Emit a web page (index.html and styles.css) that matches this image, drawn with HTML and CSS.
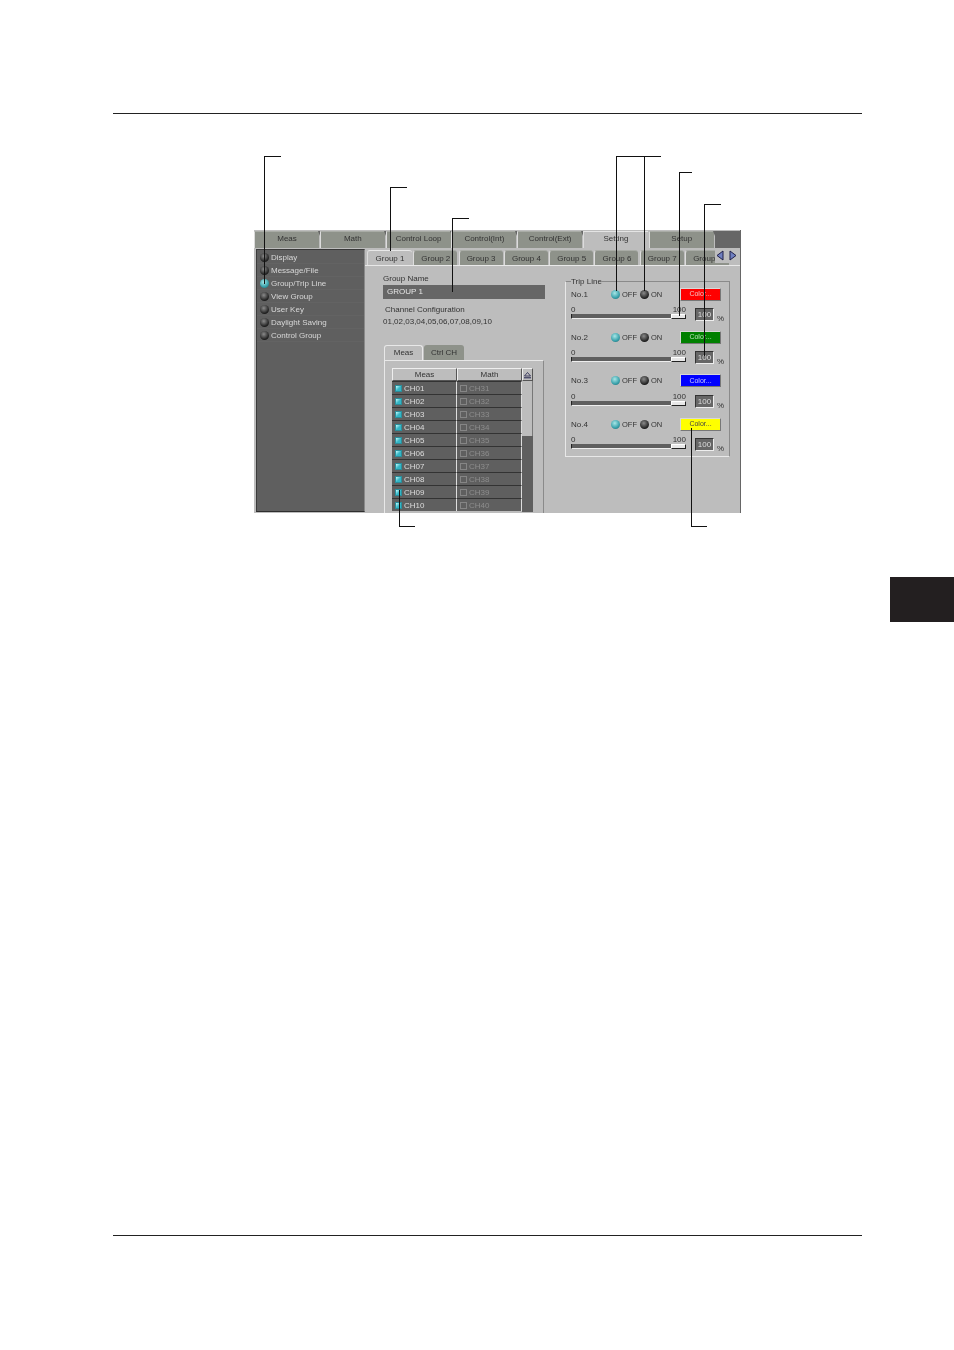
FILE: index.html
```html
<!DOCTYPE html>
<html>
<head>
  <meta charset="UTF-8">
  <meta name="viewport" content="width=device-width, initial-scale=1.0">
  <title>Group / Trip Line</title>
  <link rel="stylesheet" href="styles.css">
</head>
<body>
<div class="page">
  <div class="rule-top"></div>

  <div class="window">
    <div class="main-tabs">
      <div class="main-tab">Meas</div>
      <div class="main-tab">Math</div>
      <div class="main-tab">Control Loop</div>
      <div class="main-tab">Control(Int)</div>
      <div class="main-tab">Control(Ext)</div>
      <div class="main-tab active">Setting</div>
      <div class="main-tab">Setup</div>
      <div class="main-fill"></div>
    </div>

    <div class="window-body">
      <div class="side">
        <div class="side-item"><span class="led"></span>Display</div>
        <div class="side-item"><span class="led"></span>Message/File</div>
        <div class="side-item"><span class="led on"></span>Group/Trip Line</div>
        <div class="side-item"><span class="led"></span>View Group</div>
        <div class="side-item"><span class="led"></span>User Key</div>
        <div class="side-item"><span class="led"></span>Daylight Saving</div>
        <div class="side-item"><span class="led"></span>Control Group</div>
      </div>

      <div class="content">
        <div class="group-tabs">
          <div class="group-tab active">Group 1</div>
          <div class="group-tab">Group 2</div>
          <div class="group-tab">Group 3</div>
          <div class="group-tab">Group 4</div>
          <div class="group-tab">Group 5</div>
          <div class="group-tab">Group 6</div>
          <div class="group-tab">Group 7</div>
          <div class="group-tab cut">Group 8</div>
          <div class="arrows">
            <svg width="24" height="13" viewBox="0 0 24 13">
              <path d="M8 2 L2 6.5 L8 11 Z" fill="#6f7fc0" stroke="#20204a"/>
              <path d="M15 2 L21 6.5 L15 11 Z" fill="#6f7fc0" stroke="#20204a"/>
            </svg>
          </div>
        </div>

        <div class="pane">
          <div class="pane-left">
            <div class="label">Group Name</div>
            <div class="name-field">GROUP 1</div>
            <div class="label conf-title">Channel Configuration</div>
            <div class="label conf-list">01,02,03,04,05,06,07,08,09,10</div>

            <div class="sub-tabs">
              <div class="sub-tab active">Meas</div>
              <div class="sub-tab">Ctrl CH</div>
            </div>
            <div class="sub-pane">
              <div class="table">
                <div class="table-main">
                  <div class="table-head">
                    <div>Meas</div>
                    <div>Math</div>
                  </div>
                  <div class="table-row"><div><span class="check on"></span>CH01</div><div class="off"><span class="check"></span>CH31</div></div>
                  <div class="table-row"><div><span class="check on"></span>CH02</div><div class="off"><span class="check"></span>CH32</div></div>
                  <div class="table-row"><div><span class="check on"></span>CH03</div><div class="off"><span class="check"></span>CH33</div></div>
                  <div class="table-row"><div><span class="check on"></span>CH04</div><div class="off"><span class="check"></span>CH34</div></div>
                  <div class="table-row"><div><span class="check on"></span>CH05</div><div class="off"><span class="check"></span>CH35</div></div>
                  <div class="table-row"><div><span class="check on"></span>CH06</div><div class="off"><span class="check"></span>CH36</div></div>
                  <div class="table-row"><div><span class="check on"></span>CH07</div><div class="off"><span class="check"></span>CH37</div></div>
                  <div class="table-row"><div><span class="check on"></span>CH08</div><div class="off"><span class="check"></span>CH38</div></div>
                  <div class="table-row"><div><span class="check on"></span>CH09</div><div class="off"><span class="check"></span>CH39</div></div>
                  <div class="table-row"><div><span class="check on"></span>CH10</div><div class="off"><span class="check"></span>CH40</div></div>
                </div>
                <div class="scroll">
                  <div class="scroll-btn">
                    <svg width="9" height="8" viewBox="0 0 9 8">
                      <path d="M4.5 1.5 L7.5 5 L1.5 5 Z" fill="#bdbdbd" stroke="#20204a" stroke-width="0.8"/>
                      <path d="M1 6.8 H8" stroke="#20204a"/>
                    </svg>
                  </div>
                  <div class="scroll-thumb"></div>
                  <div class="scroll-track"></div>
                </div>
              </div>
            </div>
          </div>

          <fieldset class="trip">
            <legend>Trip Line</legend>

            <div class="trip-item">
              <div class="trip-top">
                <span class="trip-no">No.1</span>
                <span class="led on"></span><span class="opt">OFF</span>
                <span class="led"></span><span class="opt">ON</span>
                <button class="color red">Color...</button>
              </div>
              <div class="trip-bottom">
                <div class="slider">
                  <div class="slider-nums"><span>0</span><span>100</span></div>
                  <div class="slider-bar"><div class="slider-knob"></div></div>
                </div>
                <div class="value">100</div>
                <span class="pct">%</span>
              </div>
            </div>

            <div class="trip-item">
              <div class="trip-top">
                <span class="trip-no">No.2</span>
                <span class="led on"></span><span class="opt">OFF</span>
                <span class="led"></span><span class="opt">ON</span>
                <button class="color green">Color...</button>
              </div>
              <div class="trip-bottom">
                <div class="slider">
                  <div class="slider-nums"><span>0</span><span>100</span></div>
                  <div class="slider-bar"><div class="slider-knob"></div></div>
                </div>
                <div class="value">100</div>
                <span class="pct">%</span>
              </div>
            </div>

            <div class="trip-item">
              <div class="trip-top">
                <span class="trip-no">No.3</span>
                <span class="led on"></span><span class="opt">OFF</span>
                <span class="led"></span><span class="opt">ON</span>
                <button class="color blue">Color...</button>
              </div>
              <div class="trip-bottom">
                <div class="slider">
                  <div class="slider-nums"><span>0</span><span>100</span></div>
                  <div class="slider-bar"><div class="slider-knob"></div></div>
                </div>
                <div class="value">100</div>
                <span class="pct">%</span>
              </div>
            </div>

            <div class="trip-item">
              <div class="trip-top">
                <span class="trip-no">No.4</span>
                <span class="led on"></span><span class="opt">OFF</span>
                <span class="led"></span><span class="opt">ON</span>
                <button class="color yellow">Color...</button>
              </div>
              <div class="trip-bottom">
                <div class="slider">
                  <div class="slider-nums"><span>0</span><span>100</span></div>
                  <div class="slider-bar"><div class="slider-knob"></div></div>
                </div>
                <div class="value">100</div>
                <span class="pct">%</span>
              </div>
            </div>
          </fieldset>
        </div>
      </div>
    </div>
  </div>

  <div class="rule-bottom"></div>

  <!-- leader lines over the screenshot -->
  <div class="lead lead-1"></div>
  <div class="lead lead-2"></div>
  <div class="lead lead-3"></div>
  <div class="lead lead-4a"></div>
  <div class="lead lead-4b"></div>
  <div class="lead lead-5"></div>
  <div class="lead lead-6"></div>
  <div class="lead-up lead-7"></div>
  <div class="lead-up lead-8"></div>

  <div class="thumb-tab"></div>
</div>
</body>
</html>
```

FILE: styles.css
```css
* {
  box-sizing: border-box;
}

body {
  margin: 0;
  background: #fff;
  font-family: "Liberation Sans", Arial, sans-serif;
  font-size: 8px;
  color: #333;
}

.page {
  position: relative;
  width: 954px;
  height: 1350px;
  overflow: hidden;
}

.rule-top {
  height: 114px;
  margin: 0 92px 116px 113px;
  border-bottom: 1px solid #222;
}

.rule-bottom {
  height: 1px;
  margin: 722px 92px 0 113px;
  background: #222;
}

.thumb-tab {
  position: absolute;
  top: 577px;
  right: 0;
  width: 64px;
  height: 45px;
  background: #231f20;
}

/* window */
.window {
  width: 487px;
  height: 283px;
  margin-left: 254px;
  background: #bdbdbd;
  border-right: 1px solid #666;
  overflow: hidden;
  filter: blur(0.3px);
}

.main-tabs {
  display: flex;
  height: 18px;
  padding-top: 1px;
}

.main-tab {
  position: relative;
  width: 65px;
  margin-right: 0.8px;
  background: #8e928a;
  border-top: 1px solid #a9aca6;
  border-left: 1px solid #dcdcdc;
  text-align: center;
  line-height: 14px;
}

.main-tab::after {
  content: "";
  position: absolute;
  top: -1px;
  right: -3px;
  border-top: 5px solid #666;
  border-left: 2px solid transparent;
  border-right: 2px solid transparent;
}

.main-tab.active {
  background: #bdbdbd;
  border-top-color: #e4e4e4;
}

.main-tab.active::after {
  display: none;
}

.main-fill {
  flex: 1;
  background: #666;
}

.window-body {
  display: flex;
  height: 265px;
}

.side {
  width: 109px;
  height: 263px;
  margin: 1px 0 0 2px;
  padding-top: 1px;
  background: #5f5f5f;
  border: 1px solid #3a3a3a;
  border-right-color: #8a8a8a;
  border-bottom-color: #2e2e2e;
  color: #d8d8d8;
}

.side-item {
  display: flex;
  align-items: center;
  gap: 2px;
  height: 13px;
  padding-left: 3px;
  border-bottom: 1px solid #636363;
}

.led {
  flex: none;
  display: inline-block;
  width: 9px;
  height: 9px;
  border-radius: 50%;
  background: radial-gradient(circle at 42% 35%, #8a8a8a, #1c1c1c 70%);
}

.led.on {
  background: radial-gradient(circle at 42% 35%, #a8e6e6, #37a0aa 60%, #1e5c64);
}

/* right part */
.content {
  flex: 1;
  min-width: 0;
}

.group-tabs {
  position: relative;
  display: flex;
  height: 18px;
  padding: 2px 0 0 2px;
  overflow: hidden;
  border-bottom: 1px solid #e8e8e8;
}

.group-tab {
  flex: none;
  width: 44px;
  margin-right: 1.3px;
  background: #8e928a;
  border-left: 1px solid #dcdcdc;
  border-top: 1px solid #a9aca6;
  border-radius: 3px 3px 0 0;
  text-align: center;
  line-height: 15px;
}

.group-tab.active {
  width: 45px;
  height: 16px;
  background: #bdbdbd;
  border-top-color: #e8e8e8;
}

.arrows {
  position: absolute;
  top: 1px;
  right: 0;
  width: 25px;
  height: 14px;
  background: #bdbdbd;
}

.pane {
  display: flex;
  height: 247px;
}

.pane-left {
  width: 200px;
  padding: 7px 0 0 18px;
}

.label {
  height: 11px;
  line-height: 11px;
}

.name-field {
  width: 162px;
  height: 14px;
  margin-top: 1px;
  padding-left: 4px;
  background: #666;
  color: #e6e6e6;
  line-height: 14px;
}

.conf-title {
  margin-top: 5px;
  padding-left: 2px;
}

.conf-list {
  margin-top: 1px;
}

.sub-tabs {
  display: flex;
  gap: 1px;
  height: 15px;
  margin: 18px 0 0 1px;
}

.sub-tab {
  width: 40px;
  background: #8e928a;
  border-radius: 3px 3px 0 0;
  text-align: center;
  line-height: 15px;
}

.sub-tab.active {
  width: 39px;
  background: #bdbdbd;
  border: 1px solid #e8e8e8;
  border-bottom: none;
  line-height: 13px;
}

.sub-pane {
  width: 160px;
  height: 160px;
  margin-left: 1px;
  padding: 7px 0 0 7px;
  border-top: 1px solid #e8e8e8;
  border-left: 1px solid #e8e8e8;
  border-right: 1px solid #8a8a8a;
}

.table {
  display: flex;
  width: 142px;
}

.table-main {
  width: 130px;
}

.table-head,
.table-row {
  display: grid;
  grid-template-columns: 65px 65px;
}

.table-head div {
  height: 13px;
  background: #bdbdbd;
  border: 1px solid #eee;
  border-right-color: #555;
  border-bottom-color: #555;
  text-align: center;
  line-height: 11px;
}

.table-row div {
  display: flex;
  align-items: center;
  gap: 2px;
  height: 13px;
  padding-left: 3px;
  background: #5f5f5f;
  border-top: 1px solid #333;
  border-right: 1px solid #ddd;
  color: #ddd;
}

.table-row div.off {
  color: #8d8d8d;
}

.check {
  flex: none;
  width: 7px;
  height: 7px;
  border: 1px solid #858585;
}

.check.on {
  background: linear-gradient(135deg, #cff 0, #33b5c5 55%);
  border-color: #2b8d9a;
}

.scroll {
  width: 11px;
}

.scroll-btn {
  display: flex;
  align-items: center;
  justify-content: center;
  height: 13px;
  background: #bdbdbd;
  border: 1px solid #eee;
  border-right-color: #555;
  border-bottom-color: #555;
}

.scroll-thumb {
  height: 55px;
  background: #bdbdbd;
  border-right: 1px solid #777;
}

.scroll-track {
  height: 76px;
  background: #5f5f5f;
}

/* trip line group */
.trip {
  width: 165px;
  height: 180px;
  margin: 11px 0 0 0;
  padding: 1px 0 0 5px;
  border: 1px solid #e8e8e8;
  border-right-color: #8a8a8a;
  border-top-color: #8a8a8a;
}

.trip legend {
  margin-left: 0;
  padding: 0;
  line-height: 9px;
}

.trip-item {
  height: 43.4px;
}

.trip-top {
  display: flex;
  align-items: center;
  height: 14px;
}

.trip-no {
  width: 40px;
}

.opt {
  width: 18px;
  margin-left: 2px;
  font-size: 7.5px;
}

.opt + .led + .opt {
  width: 17px;
}

.color {
  width: 41px;
  height: 13px;
  margin-left: 12px;
  padding: 0;
  border: 1px solid #d8d8d8;
  border-right-color: #777;
  border-bottom-color: #777;
  font-family: inherit;
  font-size: 7px;
  line-height: 10px;
}

.red { background: #f00; color: #f4c0c0; }
.green { background: #008000; color: #b8e0b8; }
.blue { background: #00f; color: #c8c8ff; }
.yellow { background: #ff0; color: #444; }

.trip-bottom {
  display: flex;
  align-items: flex-start;
  margin-top: 4px;
}

.slider {
  width: 115px;
}

.slider-nums {
  display: flex;
  justify-content: space-between;
  height: 9px;
  line-height: 9px;
}

.slider-bar {
  display: flex;
  justify-content: flex-end;
  height: 5px;
  background: #5f5f5f;
  border-bottom: 1px solid #eee;
  border-left: 1px solid #222;
}

.slider-knob {
  width: 15px;
  height: 5px;
  background: #e8e8e8;
  border: 1px solid #222;
  border-left-color: #fff;
  border-top-color: #fff;
}

.value {
  width: 19px;
  height: 13px;
  margin: 3px 0 0 9px;
  background: #666;
  border: 1px solid #333;
  border-right-color: #eee;
  border-bottom-color: #eee;
  color: #ddd;
  text-align: center;
  line-height: 11px;
}

.pct {
  margin: 9px 0 0 3px;
}

/* leader lines */
.lead,
.lead-up {
  position: absolute;
  border-left: 1px solid #111;
}

.lead {
  border-top: 1px solid #111;
}

.lead-up {
  border-bottom: 1px solid #111;
}

.lead-1 { left: 264px; top: 156px; width: 17px; height: 128px; }
.lead-2 { left: 390px; top: 187px; width: 17px; height: 64px; }
.lead-3 { left: 452px; top: 218px; width: 17px; height: 74px; }
.lead-4a { left: 616px; top: 156px; width: 45px; height: 135px; }
.lead-4b { left: 644px; top: 156px; width: 17px; height: 135px; }
.lead-5 { left: 679px; top: 172px; width: 13px; height: 144px; }
.lead-6 { left: 704px; top: 204px; width: 17px; height: 152px; }
.lead-7 { left: 399px; top: 490px; width: 16px; height: 37px; }
.lead-8 { left: 691px; top: 428px; width: 16px; height: 99px; }
```
